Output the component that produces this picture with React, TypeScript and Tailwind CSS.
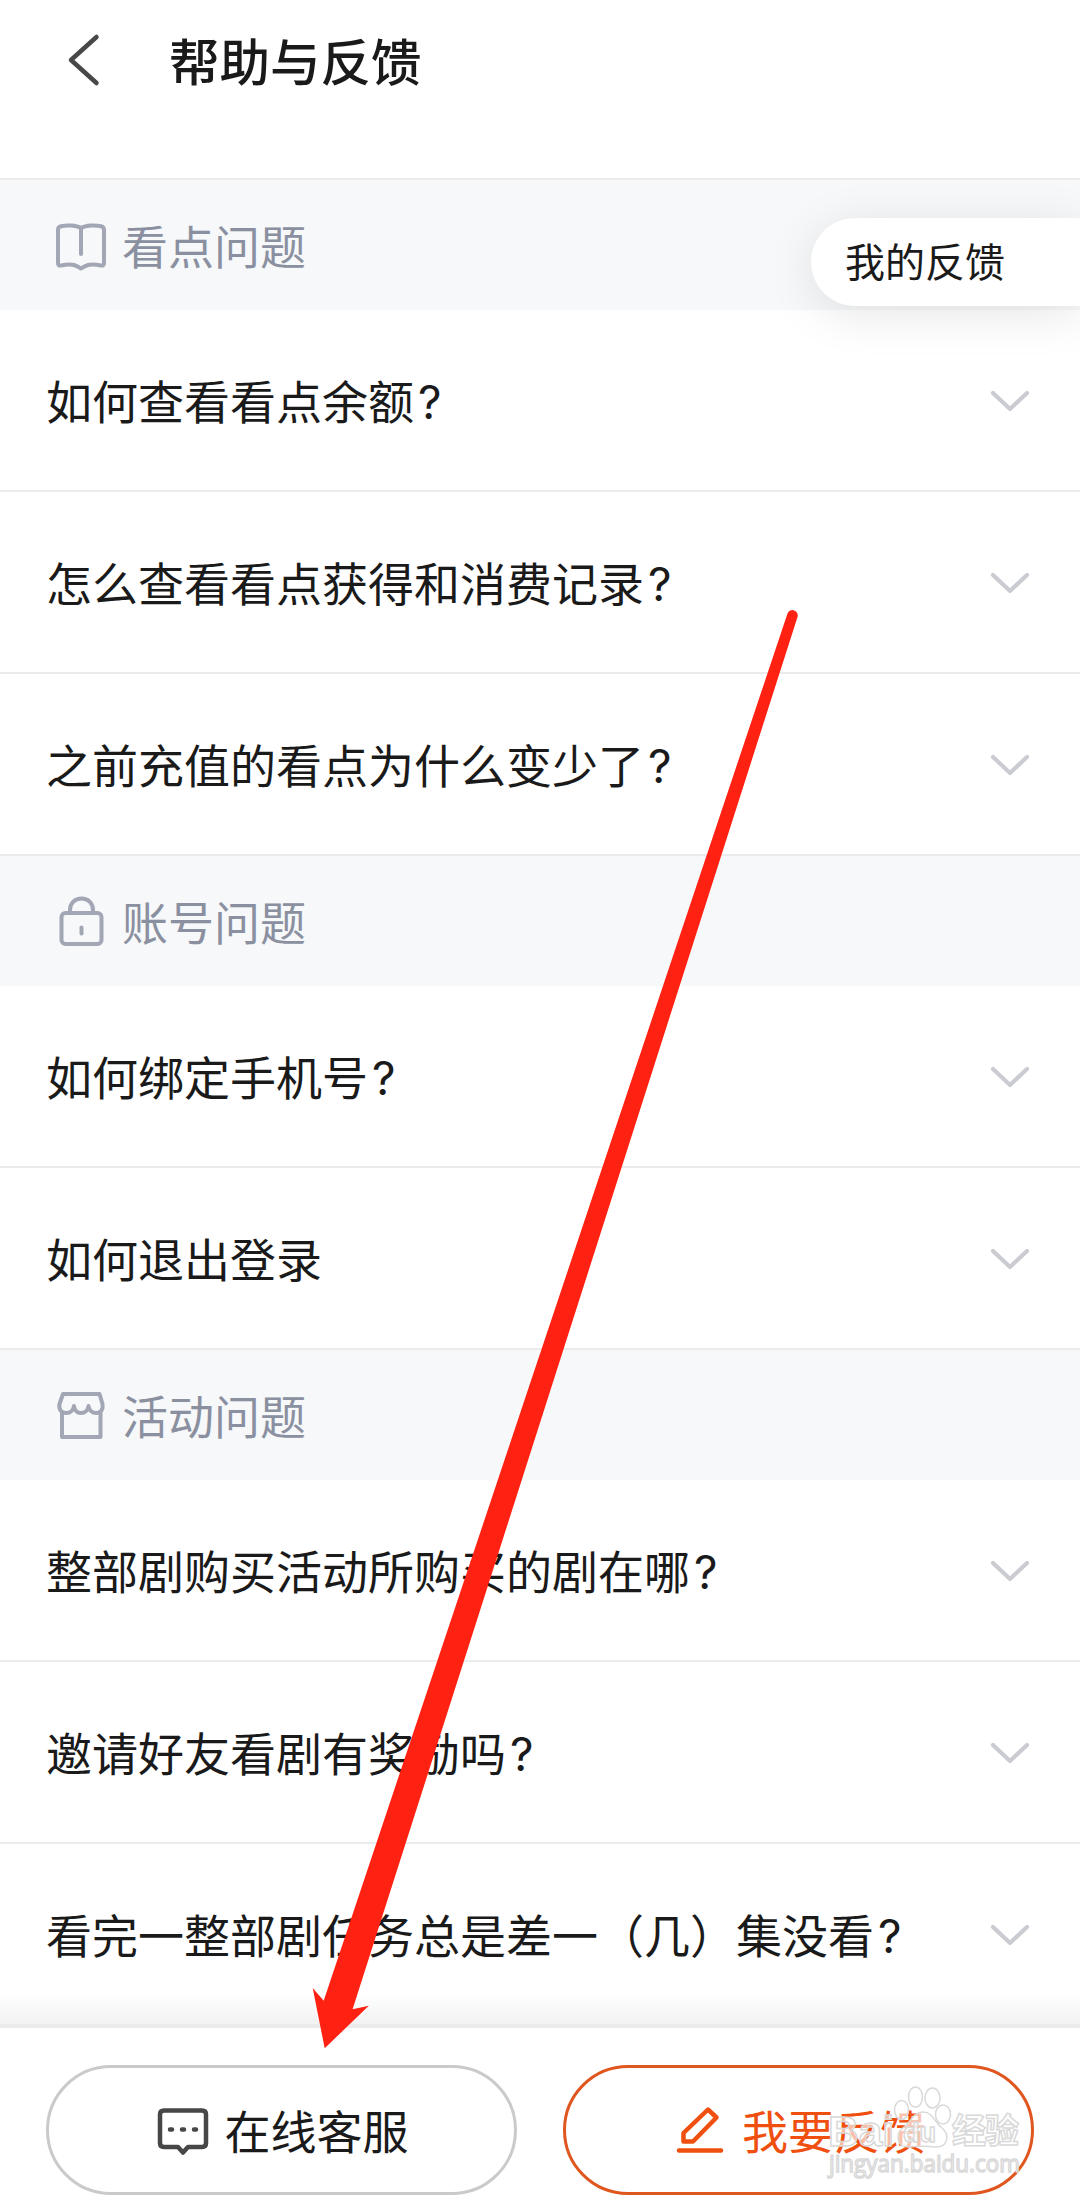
import React from 'react';

interface Section {
  title: string;
  icon: React.ReactNode;
  questions: string[];
}

const BookIcon = () => (
  <svg className="mt-[3px]" width="52" height="48" viewBox="0 0 52 48" fill="none" stroke="#a3a6b5" strokeWidth="4" strokeLinecap="round" strokeLinejoin="round">
    <path d="M26 5C21 2 11 2 6 3.200Q3 4 3 6.500V40Q3 43 6 42.500C13 41 19 41 22.500 43.500L26 45.500L29.500 43.500C33 41 39 41 46 42.500Q49 43 49 40V6.500Q49 4 46 3.200C41 2 31 2 26 5Z" />
    <path d="M26 5V31" />
  </svg>
);

const LockIcon = () => (
  <svg width="52" height="52" viewBox="0 0 52 52" fill="none" stroke="#a3a6b5" strokeWidth="4" strokeLinecap="round">
    <rect x="6.500" y="18" width="40" height="31" rx="4" />
    <path d="M15 18V15C15 8 20 3.500 26.500 3.500S38 8 38 15V18" />
    <path d="M26.500 32.500V38.500" />
  </svg>
);

const ShopIcon = () => (
  <svg width="52" height="50" viewBox="0 0 52 50" fill="none" stroke="#a3a6b5" strokeWidth="4" strokeLinecap="round" strokeLinejoin="round">
    <path d="M7 23V47H45.500V23" />
    <path d="M8 4H44.500L47.500 14C48.500 19 46 23 41.500 23C37 23 34 20 33.500 16C33 20 30 23 26 23S19.500 20 19 16C18.500 20 15.500 23 11 23C6 23 3.500 19 4.500 14Z" />
  </svg>
);

const ChatIcon = () => (
  <svg className="mt-[4px]" width="52" height="48" viewBox="0 0 52 48" fill="none" stroke="#474747" strokeWidth="4.500" strokeLinecap="round" strokeLinejoin="round">
    <path d="M7 2.500H45Q49 2.500 49 6.500V35Q49 39 45 39H31L26 44.500L21 39H7Q3 39 3 35V6.500Q3 2.500 7 2.500Z" />
    <path d="M13 21.500H15M25 21.500H27M37 21.500H39" />
  </svg>
);

const PenIcon = () => (
  <svg width="48" height="48" viewBox="0 0 48 48" fill="none" stroke="#f0500f" strokeWidth="4.500" strokeLinecap="round" strokeLinejoin="round">
    <path d="M32 3.500L40.500 11.500L17 35.500H7.500V27Z" />
    <path d="M3 44.500H45" />
  </svg>
);

const ChevronDown = () => (
  <svg className="mt-[4px] shrink-0" width="40" height="24" viewBox="0 0 40 24" fill="none" stroke="#cbccd2" strokeWidth="4.200" strokeLinecap="round" strokeLinejoin="round">
    <path d="M3 3L20 19L37 3" />
  </svg>
);

const sections: Section[] = [
  {
    title: '看点问题',
    icon: <BookIcon />,
    questions: ['如何查看看点余额?', '怎么查看看点获得和消费记录?', '之前充值的看点为什么变少了?'],
  },
  {
    title: '账号问题',
    icon: <LockIcon />,
    questions: ['如何绑定手机号?', '如何退出登录'],
  },
  {
    title: '活动问题',
    icon: <ShopIcon />,
    questions: ['整部剧购买活动所购买的剧在哪?', '邀请好友看剧有奖励吗?', '看完一整部剧任务总是差一（几）集没看?'],
  },
];

const Watermark = () => (
  <svg className="absolute left-[820px] top-[2080px]" width="220" height="110" viewBox="0 0 220 110" fill="#ffffff" fillOpacity="0.65" stroke="#d9d9d9" strokeWidth="1.500">
    <ellipse cx="95.500" cy="17" rx="7" ry="10" />
    <ellipse cx="112.500" cy="18" rx="7.500" ry="10" />
    <ellipse cx="81.500" cy="30" rx="7" ry="9.500" />
    <ellipse cx="123" cy="34.500" rx="7.500" ry="9.500" />
    <path d="M103 32C93 32 91 42 84 47C75 53 76 67 88 67C97 66 107 66 116 67C128 67 130 55 122 48C114 42 113 32 103 32Z" />
    <text x="8" y="66" fontFamily="Liberation Sans" fontWeight="bold" fontSize="43" textLength="66" lengthAdjust="spacingAndGlyphs">Bai</text>
    <text x="83" y="62" fontFamily="Liberation Sans" fontWeight="bold" fontSize="27">du</text>
    <text x="132" y="63" fontFamily="Noto Sans CJK SC" fontWeight="bold" fontSize="34" textLength="67">经验</text>
    <text x="9" y="92" fontFamily="Open Sans" fontSize="24" textLength="191" lengthAdjust="spacingAndGlyphs">jingyan.baidu.com</text>
  </svg>
);

const Question = ({ text }: { text: string }) => {
  const asks = text.endsWith('?');
  return (
    <p className="-mt-[2px] h-[46px] whitespace-nowrap text-[46px] leading-[46px]">
      {asks ? text.slice(0, -1) : text}
      {asks && <span className="ml-[4px] font-[Inter] leading-[0]">?</span>}
    </p>
  );
};

const App: React.FC = () => {
  return (
    <div className="relative flex h-[2202px] w-[1080px] flex-col overflow-hidden bg-white font-['Noto_Sans_CJK_SC',sans-serif] text-[#1a1a1a]">
      <header className="flex h-[180px] shrink-0 items-start border-b-2 border-[#ebebeb] pl-[66px] pt-[21px]">
        <svg className="mt-[11px]" width="36" height="56" viewBox="0 0 36 56" fill="none" stroke="#484848" strokeWidth="4.500" strokeLinecap="round" strokeLinejoin="round">
          <path d="M30.500 5L5 28L30.500 51" />
        </svg>
        <h1 className="ml-[67px] text-[50.500px] font-medium leading-[76px]">帮助与反馈</h1>
      </header>

      <main className="min-h-0 flex-1 overflow-hidden">
        {sections.map(section => (
          <section key={section.title}>
            <div className="flex h-[130px] items-center bg-[#f6f8fa] pl-[55px] text-[#8b90a0]">
              {section.icon}
              <h2 className="-mt-[2px] ml-[15px] text-[46px] leading-none">{section.title}</h2>
            </div>
            {section.questions.map(q => (
              <div key={q} className="flex h-[182px] items-center justify-between border-b-2 border-[#ebebeb] pl-[46px] pr-[50px]">
                <Question text={q} />
                <ChevronDown />
              </div>
            ))}
          </section>
        ))}
      </main>

      <footer className="relative flex h-[178px] shrink-0 items-start justify-between border-t-4 border-[#ebebeb] bg-white px-[46px] pt-[37px]">
        <div className="absolute -top-[36px] left-0 h-[32px] w-full bg-gradient-to-b from-transparent to-black/5" />
        <button className="flex h-[130px] w-[471px] items-center justify-center rounded-full border-3 border-[#cacaca] pl-[2px] text-[46px]">
          <ChatIcon />
          <span className="-mt-[2px] ml-[16px] leading-none">在线客服</span>
        </button>
        <button className="flex h-[130px] w-[471px] items-center justify-center rounded-full border-3 border-[#e0561f] pl-[5px] text-[46px] text-[#f0500f]">
          <PenIcon />
          <span className="-mt-[2px] ml-[18px] leading-none">我要反馈</span>
        </button>
      </footer>

      {/* floating entry */}
      <button className="absolute right-0 top-[218px] flex h-[88px] w-[269px] items-center rounded-l-full bg-white pb-[4px] pl-[34px] text-[40px] leading-none shadow-[0_8px_48px_rgba(0,0,0,0.1)]">
        我的反馈
      </button>

      <Watermark />

      <svg className="pointer-events-none absolute left-0 top-0" width="1080" height="2202" viewBox="0 0 1080 2202">
        <path
          fill="#ff2112"
          d="M787.500 613.500A5.300 5.300 0 0 1 797.500 617L352.600 2009.300L368.800 2005.700L324.700 2048.300L312.700 1988L323.700 2000.700Z"
        />
      </svg>
    </div>
  );
};

export default App;
